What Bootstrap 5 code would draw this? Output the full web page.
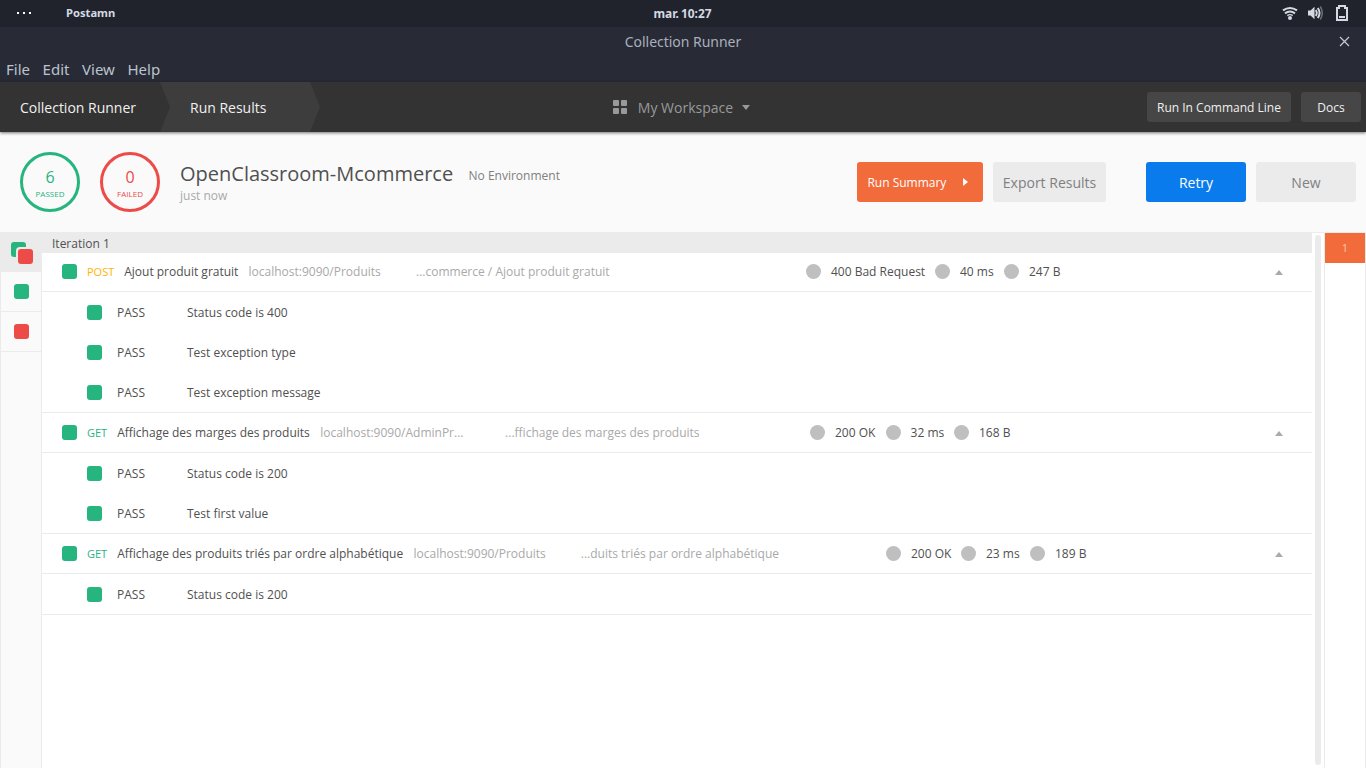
<!DOCTYPE html>
<html lang="fr">
<head>
<meta charset="utf-8">
<title>Collection Runner</title>
<link rel="stylesheet" href="https://cdn.jsdelivr.net/npm/bootstrap@5.3.0/dist/css/bootstrap.min.css">
<style>
body{font-family:"Open Sans",sans-serif;font-size:12px;line-height:18px;color:#505050;background:#fff}
svg{display:block;flex:none}
.desk-bar{height:27px;background:#20232b;color:#d3dae3;font:bold 11.2px/26px "Noto Sans",sans-serif}
.desk-side{width:400px}
.clock{font-size:11.9px;line-height:27px;word-spacing:-1px;padding-right:1px}
.win-bar{height:55px;background:#282b35;color:#bac3cf;font-family:"Noto Sans",sans-serif}
.win-title{height:29px;line-height:29px;font-size:14px;letter-spacing:-.03px;color:#a9b0bd}
.win-menu{font-size:15px;line-height:26px;gap:12.6px;padding-left:6px}
.app-head{height:50px;background:#333;box-shadow:0 1px 3px rgba(0,0,0,.55);z-index:2}
.crumb{font-size:14px;color:#f0f0f0;height:50px;line-height:51px}
.crumb-first{width:170px;padding-left:20px}
.crumb-on{width:160px;margin-left:-10px;padding-left:30px;background:#3d3d3d;clip-path:polygon(0 0,150px 0,100% 50%,150px 100%,0 100%,10px 50%)}
.workspace{font-size:14px;color:#999;line-height:51px;padding-right:2px}
.btn-dark2{height:30px;background:#464646;color:#f0f0f0;font-size:12px;line-height:30px;padding:1px 0 0;border:0;border-radius:3px}
.summary{height:100px;background:#fafafa;padding:20px 10px 20px 20px}
.ring{width:60px;height:60px;border:3px solid;border-radius:50%;padding-top:13px;text-align:center;margin-right:20px}
.ring b{display:block;font-weight:400;font-size:16px;line-height:18px}
.ring span{display:block;font-size:8px;line-height:15px;letter-spacing:.02px}
.c-pass{color:#26b47f}.c-fail{color:#ed4b48}.c-post{color:#ffb400}
.run-name{font-size:20px;line-height:28px}
.env{color:#808080;margin-left:15.4px;padding-top:3px}
.when{margin-top:-1px}
.act{height:40px;border:0;border-radius:3px;padding:0;font-size:14px;line-height:41px;background:#ebebeb;color:#808080}
.act-run{width:126px;background:#f26b3a;color:#fff;font-size:12px;padding:0 15px 0 10.4px}
.act-retry{background:#097bed;color:#fff}
.pane{height:536px;border-top:1px solid #ebebeb}
.filters{width:42px;background:#fafafa;border:1px solid #ebebeb;border-width:0 1px}
.filters>div{height:40px;border-bottom:1px solid #ebebeb}
.filters>div:first-child{height:39px;background:#ebebeb}
.sq{width:15px;height:15px;border-radius:3px;background:#26b47f;flex:none}
.sq-red{background:#ed4b48}
.iter{height:20px;background:#ebebeb;line-height:21px;padding-left:10px}
.results{width:1270px}
.req{height:40px;border-bottom:1px solid #ebebeb;display:grid;align-items:center;padding-left:20px;white-space:nowrap}
.req-a{height:39px;padding-bottom:1px;grid-template-columns:25px 37.2px 124.3px 167.5px 390px 129px 69px 1fr 38px}
.req-b{grid-template-columns:25px 30.2px 203px 184.9px 304.9px 75.6px 68.4px 1fr 38px}
.req-c{grid-template-columns:25px 30.2px 296.3px 167.3px 305.200px 75px 69px 1fr 38px}
.req>svg{margin-top:2px}
.verb{font-size:11px;padding-top:1px}
.dim{color:#a9a9a9}
.stat{display:flex;align-items:center;gap:10px}
.stat::before{content:"";width:15px;height:15px;border-radius:50%;background:#bfbfbf}
.checks{border-bottom:1px solid #ebebeb}
.check-line{height:40px;padding:1px 0 0 45px}
.check-line span{width:70px;margin-left:15px}
.check-line em{font-style:normal}
.thumb{width:6px;margin:2px 3px 3px;border-radius:3px;background:#ebebeb}
.iters{width:42px;border:1px solid #ebebeb;border-width:0 1px}
.iters div{height:30px;line-height:30px;background:#f26b3a;color:#fbc9b5;font-size:11px}
</style>
</head>
<body class="vh-100 overflow-hidden">
<div class="desk-bar d-flex justify-content-between">
  <div class="desk-side d-flex align-items-start">
    <svg width="66" height="27" fill="#fff"><path d="M17 12h2v2h-2zM23 12h2v2h-2zM29 12h2v2h-2z"/></svg><span>Postamn</span>
  </div>
  <span class="clock">mar. 10:27</span>
  <div class="desk-side d-flex justify-content-end">
    <svg width="90" height="27" viewBox="1276 0 90 27" fill="none" stroke="#d3dae3">
      <path d="M1283 10.4q7-4.8 14 0" stroke-width="2.2"/><path d="M1285 13.4q5-3.6 10 0" stroke-width="2"/><path d="M1287.3 15.6q2.7-1.9 5.4 0" stroke-width="1.4"/><circle cx="1290" cy="18" r="2" fill="#d3dae3" stroke="none"/>
      <path d="M1308 10.5h2.5l4-3.7v12.4l-4-3.7h-2.5z" fill="#d3dae3" stroke="none"/><path d="M1315.8 10q2 3 0 6" stroke-width="1.8"/><path d="M1317.8 8q3.5 5 0 10" stroke-width="2"/><path d="M1320.3 6.5q4 6.5 0 13" stroke="#6a707a" stroke-width="1.5"/>
      <path d="M1337 8h2V6h6v2h2v12h-10z" stroke-width="2"/><path d="M1339 17h6" stroke-width="2"/>
    </svg>
  </div>
</div>
<div class="win-bar">
  <div class="win-title position-relative text-center">Collection Runner
    <svg class="position-absolute top-0 end-0" width="30" height="29" stroke="#c5cbd5" stroke-width="1.2"><path d="M4 10l9 9M13 10l-9 9"/></svg>
  </div>
  <div class="win-menu d-flex"><span>File</span><span>Edit</span><span>View</span><span>Help</span></div>
</div>
<header class="app-head position-relative d-flex justify-content-between">
  <div class="d-flex desk-side"><div class="crumb crumb-first">Collection Runner</div><div class="crumb crumb-on">Run Results</div></div>
  <div class="workspace d-flex align-items-center">
    <svg class="me-2" width="17" height="14" fill="#999"><rect width="6" height="6" rx="1"/><rect x="8" width="6" height="6" rx="1"/><rect y="8" width="6" height="6" rx="1"/><rect x="8" y="8" width="6" height="6" rx="1"/></svg>
    <span>My Workspace</span><svg class="ms-2" width="10" height="5" fill="#999"><path d="M1 0h8L5 5z"/></svg>
  </div>
  <div class="desk-side d-flex justify-content-end align-items-center pe-1">
    <button class="btn btn-dark2" style="width:144px">Run In Command Line</button>
    <button class="btn btn-dark2" style="width:60px;margin:0 1px 0 10px">Docs</button>
  </div>
</header>
<section class="summary d-flex">
  <div class="ring c-pass"><b>6</b><span>PASSED</span></div>
  <div class="ring c-fail"><b>0</b><span>FAILED</span></div>
  <div class="pt-2">
    <div class="d-flex align-items-center"><span class="run-name">OpenClassroom-Mcommerce</span><span class="env">No Environment</span></div>
    <div class="dim when">just now</div>
  </div>
  <div class="ms-auto d-flex align-items-center">
    <button class="btn act act-run d-flex justify-content-between align-items-center">Run Summary<svg width="5" height="8" fill="#fff"><path d="M0 0l5 4-5 4z"/></svg></button>
    <button class="btn act" style="width:113px;margin:0 40px 0 10px">Export Results</button>
    <button class="btn act act-retry" style="width:100px">Retry</button>
    <button class="btn act" style="width:100px;margin-left:10px">New</button>
  </div>
</section>
<main class="pane d-flex">
  <aside class="filters">
    <div><svg width="40" height="38"><rect x="10" y="9" width="15" height="15" rx="3" fill="#26b47f"/><rect x="15" y="14" width="19" height="19" rx="4" fill="#ebebeb"/><rect x="17" y="16" width="15" height="15" rx="3" fill="#ed4b48"/></svg></div>
    <div class="d-flex justify-content-center align-items-center"><i class="sq"></i></div>
    <div class="d-flex justify-content-center align-items-center"><i class="sq sq-red"></i></div>
  </aside>
  <div class="results">
    <div class="iter">Iteration 1</div>
    <div class="req req-a"><i class="sq"></i><span class="verb c-post">POST</span><span>Ajout produit gratuit</span><span class="dim">localhost:9090/Produits</span><span class="dim">...commerce / Ajout produit gratuit</span><span class="stat">400 Bad Request</span><span class="stat">40 ms</span><span class="stat">247 B</span><svg width="10" height="5" fill="#aaa"><path d="M1 5h8L5 0z"/></svg></div>
    <div class="checks">
      <div class="check-line d-flex align-items-center"><i class="sq"></i><span>PASS</span><em>Status code is 400</em></div>
      <div class="check-line d-flex align-items-center"><i class="sq"></i><span>PASS</span><em>Test exception type</em></div>
      <div class="check-line d-flex align-items-center"><i class="sq"></i><span>PASS</span><em>Test exception message</em></div>
    </div>
    <div class="req req-b"><i class="sq"></i><span class="verb c-pass">GET</span><span>Affichage des marges des produits</span><span class="dim">localhost:9090/AdminPr...</span><span class="dim">...ffichage des marges des produits</span><span class="stat">200 OK</span><span class="stat">32 ms</span><span class="stat">168 B</span><svg width="10" height="5" fill="#aaa"><path d="M1 5h8L5 0z"/></svg></div>
    <div class="checks">
      <div class="check-line d-flex align-items-center"><i class="sq"></i><span>PASS</span><em>Status code is 200</em></div>
      <div class="check-line d-flex align-items-center"><i class="sq"></i><span>PASS</span><em>Test first value</em></div>
    </div>
    <div class="req req-c"><i class="sq"></i><span class="verb c-pass">GET</span><span>Affichage des produits triés par ordre alphabétique</span><span class="dim">localhost:9090/Produits</span><span class="dim">...duits triés par ordre alphabétique</span><span class="stat">200 OK</span><span class="stat">23 ms</span><span class="stat">189 B</span><svg width="10" height="5" fill="#aaa"><path d="M1 5h8L5 0z"/></svg></div>
    <div class="checks">
      <div class="check-line d-flex align-items-center"><i class="sq"></i><span>PASS</span><em>Status code is 200</em></div>
    </div>
  </div>
  <div class="thumb"></div>
  <aside class="iters text-center"><div>1</div></aside>
</main>
<script src="https://cdn.jsdelivr.net/npm/bootstrap@5.3.0/dist/js/bootstrap.bundle.min.js"></script>
</body>
</html>
